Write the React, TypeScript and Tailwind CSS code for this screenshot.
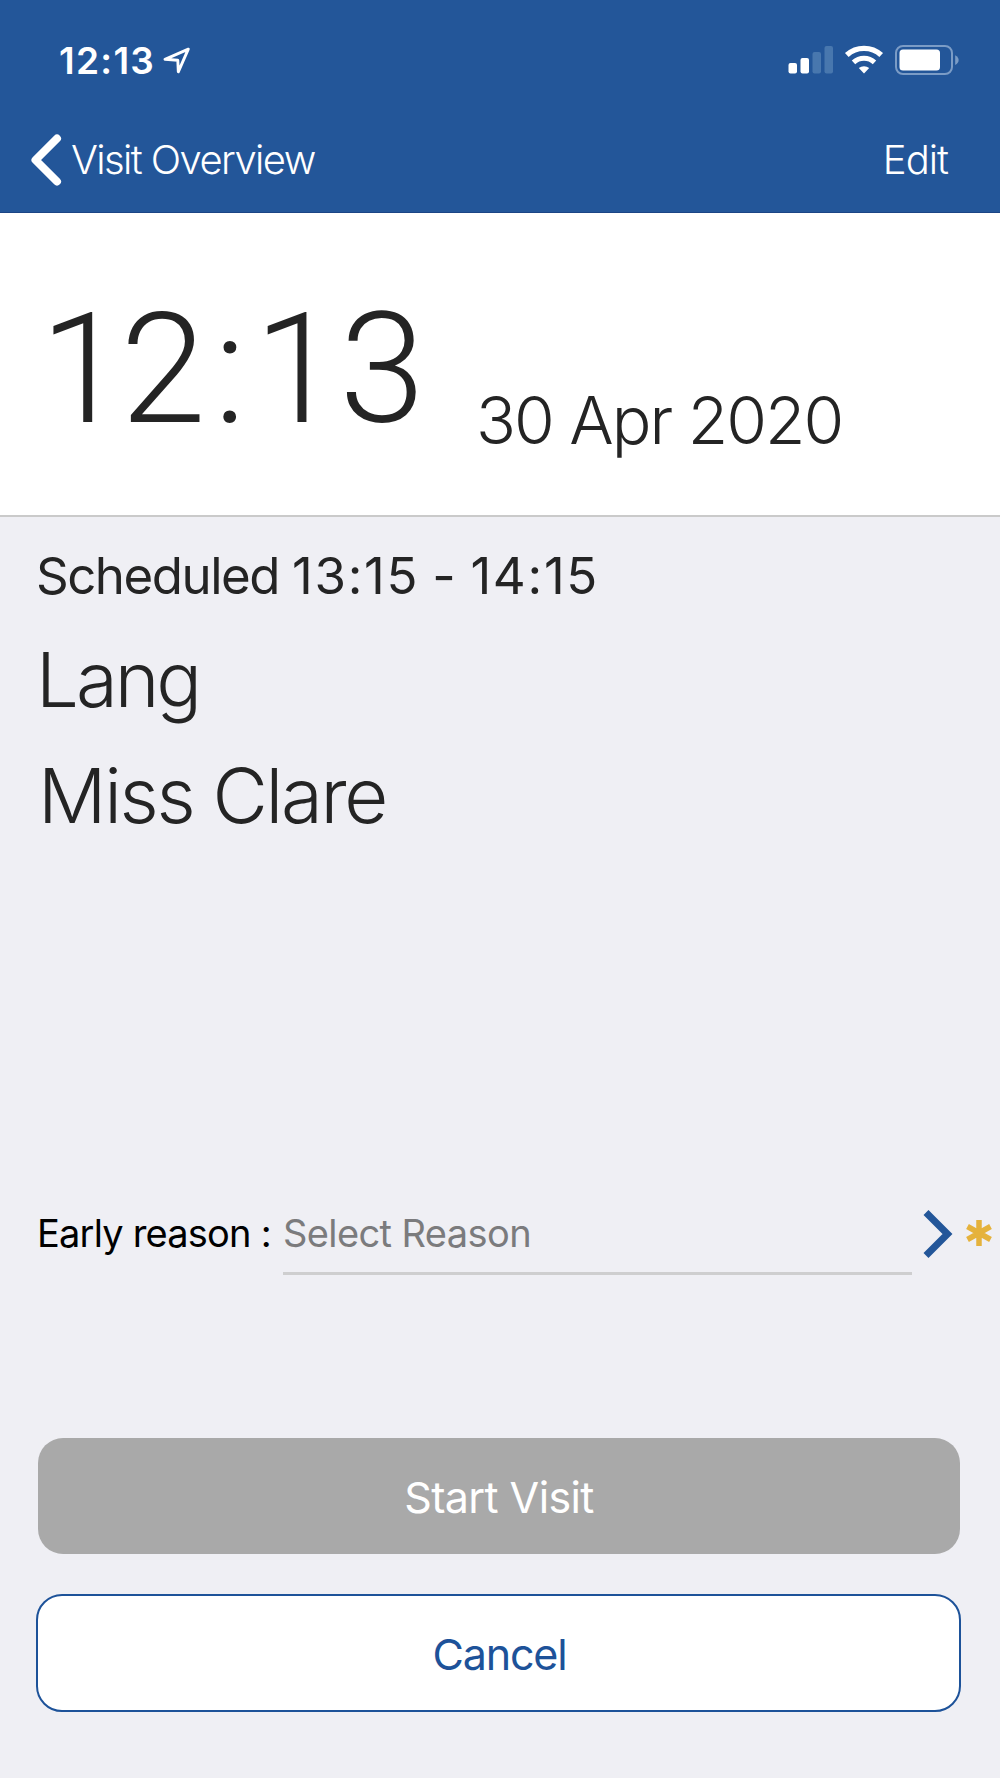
function StatusIcons() {
  return (
    <svg width="172" height="34" viewBox="0 0 172 34" fill="none">
      {/* signal */}
      <rect x="1.5" y="19" width="8.5" height="10.5" rx="2" fill="#fff" />
      <rect x="13.5" y="14" width="8.5" height="15.5" rx="2" fill="#fff" />
      <rect x="25.5" y="8" width="8.5" height="21.5" rx="2" fill="#4877ae" />
      <rect x="37.5" y="2" width="8.5" height="27.5" rx="2" fill="#4877ae" />
      {/* wifi */}
      <path d="M59.8 11a25.5 25.5 0 0 1 34.4 0" stroke="#fff" strokeWidth="5.4" />
      <path d="M66.5 18.4a15.3 15.3 0 0 1 21 0" stroke="#fff" strokeWidth="5" />
      <path d="M71.8 24a8.2 8.2 0 0 1 10.4 0L77 29.6z" fill="#fff" />
      {/* battery */}
      <rect x="109" y="2" width="56" height="28" rx="7" stroke="#7b9cc6" strokeWidth="2" />
      <rect x="112.5" y="5.5" width="40.5" height="21" rx="3.5" fill="#fff" />
      <path d="M168.2 11.2c4.6 2.2 4.6 7.6 0 9.8z" fill="#7b9cc6" />
    </svg>
  );
}

function LocationArrow() {
  return (
    <svg width="28" height="28" viewBox="0 0 28 28" fill="none">
      <path
        d="M25.3 2.2 2 12.3 14.8 13.2 15.3 24.8z"
        stroke="#fff"
        strokeWidth="2.9"
        strokeLinejoin="round"
      />
    </svg>
  );
}

export default function App() {
  return (
    <div className="flex h-[1778px] w-[1000px] flex-col overflow-hidden bg-[#efeff4] font-['Inter',sans-serif] text-[#242424]">
      <header className="h-[213px] shrink-0 border-b border-[#1b4585] bg-[#235699] text-white">
        <div className="flex h-[122px] items-center pl-[59px] pr-[41px]">
          <span className="text-[37px] font-semibold leading-[40px] tracking-[1.3px]">12:13</span>
          <span className="ml-2">
            <LocationArrow />
          </span>
          <span className="ml-auto">
            <StatusIcons />
          </span>
        </div>
        <div className="flex h-[76px] items-center pl-[30px] pr-[52px]">
          <svg width="34" height="54" viewBox="0 0 34 54" fill="none">
            <path
              d="M27 5.5 5.5 27 27 48.5"
              stroke="#fff"
              strokeWidth="8"
              strokeLinecap="round"
              strokeLinejoin="round"
            />
          </svg>
          <span className="ml-[7px] text-[40px] font-light leading-[48px] tracking-[-1.6px]">Visit Overview</span>
          <button className="ml-auto text-[40px] font-light leading-[48px] tracking-[-1px]">Edit</button>
        </div>
      </header>

      <section className="flex h-[304px] shrink-0 items-start border-b-2 border-[#cacaca] bg-white pl-10">
        <p className="mt-[82px] w-[433px] font-['Roboto',sans-serif] text-[154px] font-light leading-[150px]">
          <span className="tracking-[-5px]">1</span>
          <span className="tracking-[8px]">2:</span>
          13
        </p>
        <p className="mt-[177px] ml-[3px] text-[66px] font-light leading-[61px] tracking-[-2px]">30 Apr 2020</p>
      </section>

      <main className="flex flex-col pl-[37px] pt-7">
        <p className="-ml-px text-[51px] leading-[61px]">
          <span className="tracking-[-1.5px]">Scheduled</span>
          <span className="tracking-[1.7px] [word-spacing:-3px]"> 13:15 - 14:15</span>
        </p>
        <p className="-ml-px mt-[33px] text-[76px] font-light leading-[80px] tracking-[-3px]">Lang</p>
        <p className="mt-9 pl-px text-[76px] font-light leading-[80px] tracking-[-2.3px]">Miss Clare</p>

        <div className="mt-[360px] flex h-20 items-start">
          <label className="w-[246px] text-[38px] leading-[77px] tracking-[-0.8px] text-black">Early reason :</label>
          <div className="h-20 w-[629px] border-b-[3px] border-[#cececf] text-[38px] leading-[77px] tracking-[-0.6px] text-[#7b7b7d]">
            Select Reason
          </div>
          <svg className="ml-[10px] mt-[13px]" width="32" height="52" viewBox="0 0 32 52" fill="none">
            <path d="M4 4.5 25.5 26 4 47.5" stroke="#235699" strokeWidth="7" />
          </svg>
          <svg className="ml-[11px] mt-[24px]" width="28" height="28" viewBox="0 0 28 28" fill="none">
            <path d="M14 1v26M2.5 7.5l23 13M25.5 7.5l-23 13" stroke="#e5b23c" strokeWidth="5.5" />
          </svg>
        </div>

        <button className="ml-px mt-[163px] h-[116px] w-[922px] rounded-[25px] bg-[#a9a9a9] pt-px text-[43px] leading-[50px] tracking-[-0.6px] text-white">
          Start Visit
        </button>
        <button className="-ml-px mt-10 h-[118px] w-[925px] rounded-[26px] border-[2.5px] border-[#1d5299] bg-white pl-[2px] pt-px text-[43px] leading-[50px] tracking-[-1.2px] text-[#1d5299]">
          Cancel
        </button>
      </main>
    </div>
  );
}
